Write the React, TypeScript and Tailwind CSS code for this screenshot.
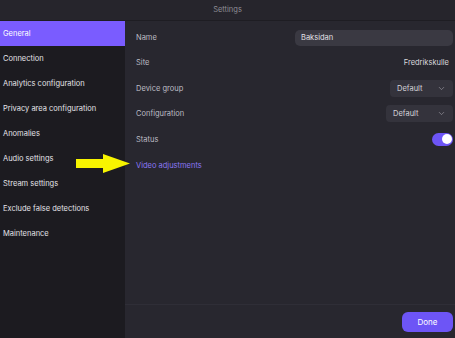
import { ChevronDown } from 'lucide-react'

const menu = [
  'General',
  'Connection',
  'Analytics configuration',
  'Privacy area configuration',
  'Anomalies',
  'Audio settings',
  'Stream settings',
  'Exclude false detections',
  'Maintenance',
]

function Select({ width }: { width: string }) {
  return (
    <div className={`${width} h-[17px] rounded-[4px] bg-[#34333c] flex items-center justify-between pl-[7px] pr-[7px] text-[#d4d3da]`}>
      <span>Default</span>
      <ChevronDown className="w-[9px] h-[9px] text-[#a9a8b0]" strokeWidth={1.5} />
    </div>
  )
}

export default function App() {
  return (
    <div className="w-[455px] h-[338px] flex flex-col bg-[#28272f] text-[7.5px] text-[#d9d8de] overflow-hidden" style={{ fontFamily: 'Inter, "Noto Sans", sans-serif' }}>
      <header className="h-[21px] shrink-0 flex items-center justify-center bg-[#26252c] border-b border-[#1e1d23] text-[#8e8d96]">
        Settings
      </header>

      <div className="flex flex-1 min-h-0">
        <nav className="w-[125px] shrink-0 bg-[#1c1b20]">
          {menu.map((item, i) => (
            <div
              key={item}
              className={`h-[25px] flex items-center pl-[3px] ${i === 0 ? 'bg-[#7a5cff] text-white' : 'text-[#e4e3e8]'}`}
            >
              {item}
            </div>
          ))}
        </nav>

        <main className="flex-1 flex flex-col min-w-0">
          <div className="relative flex-1 pt-[4px] pl-[11px] pr-[2px]">
            <div className="h-[25.4px] flex items-center justify-between">
              <span className="text-[#bdbcc4]">Name</span>
              <div className="w-[158px] h-[16px] rounded-[5px] bg-[#3a3942] flex items-center pl-[6px] text-[#e1e0e6]">
                Baksidan
              </div>
            </div>
            <div className="h-[25.4px] flex items-center justify-between">
              <span className="text-[#bdbcc4]">Site</span>
              <span className="pr-[4px] text-[#d9d8de]">Fredrikskulle</span>
            </div>
            <div className="h-[25.4px] flex items-center justify-between">
              <span className="text-[#bdbcc4]">Device group</span>
              <Select width="w-[63px]" />
            </div>
            <div className="h-[25.4px] flex items-center justify-between">
              <span className="text-[#bdbcc4]">Configuration</span>
              <Select width="w-[67px]" />
            </div>
            <div className="h-[25.4px] flex items-center justify-between">
              <span className="text-[#bdbcc4]">Status</span>
              <div className="w-[21px] h-[13px] rounded-full bg-[#6d55f6] flex items-center justify-end pr-[1px]">
                <div className="w-[10px] h-[10px] rounded-full bg-white" />
              </div>
            </div>
            <div className="h-[27px] flex items-center">
              <span className="text-[#8b78f5]">Video adjustments</span>
            </div>

            <svg className="absolute left-[-49px] top-[133px]" width="55" height="19" viewBox="0 0 55 19">
              <polygon points="0,5 27,5 27,0 54,9.5 27,19 27,14 0,14" fill="#f7f400" />
            </svg>
          </div>

          <footer className="h-[34px] shrink-0 border-t border-[#2f2e37] flex items-center justify-end pr-[2px]">
            <button className="w-[51px] h-[20px] rounded-[6px] bg-[#6d55f6] text-white text-[8px]">Done</button>
          </footer>
        </main>
      </div>
    </div>
  )
}
